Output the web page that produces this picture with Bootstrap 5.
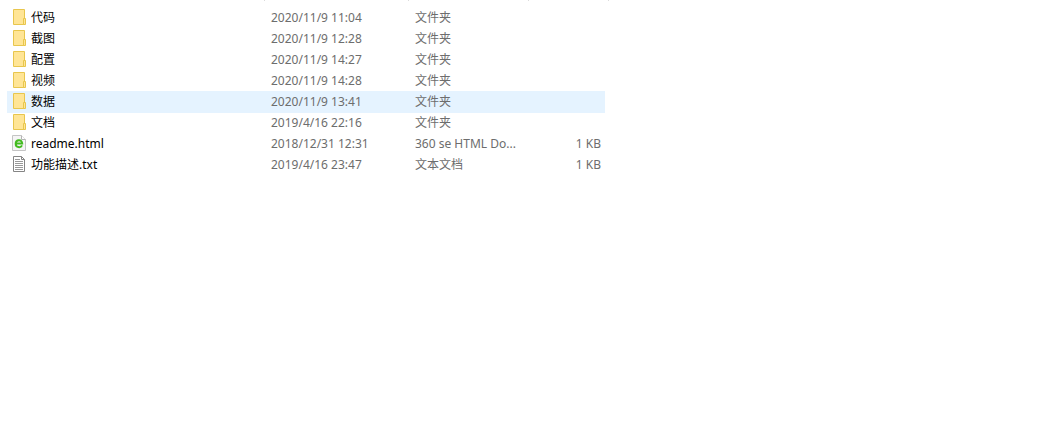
<!DOCTYPE html>
<html lang="zh-CN">
<head>
<meta charset="utf-8">
<meta name="viewport" content="width=device-width, initial-scale=1">
<title>文件列表</title>
<link href="https://cdn.jsdelivr.net/npm/bootstrap@5.3.0/dist/css/bootstrap.min.css" rel="stylesheet">
<style>
  body { background: #fff; font-family: "Noto Sans", "Noto Sans CJK SC", sans-serif; font-size: 12px; line-height: 21px; }
  .file-head { grid-template-columns: 258px 144px 120px 80px; height: 1px; padding-left: 7px; }
  .file-head span { border-right: 1px solid #dcdcdc; }
  .file-area { padding: 6px 7px; }
  .file-list { width: 598px; max-width: 100%; table-layout: fixed; color: #6d6d6d; }
  .file-list td { height: 21px; padding: 0 0 0 6px; white-space: nowrap; overflow: hidden; text-overflow: ellipsis; }
  .file-list td:first-child { padding-left: 5px; }
  .file-list td:last-child { padding-right: 4px; }
  .file-list .selected { background: #e5f3ff; box-shadow: 0 1px #e5f3ff; }
  .file-name { color: #000; gap: 5px; }
  .file-name svg { width: 14px; height: 16px; margin-top: 2px; flex: none; }
</style>
</head>
<body>
<svg class="d-none" aria-hidden="true">
  <symbol id="folder" viewBox="0 0 14 16">
    <path d="M1.500.5h11v15h-11z" fill="#ffe596" stroke="#e8c64d"/>
    <path d="M11.500 9.500h2v6h-2z" fill="#ffe596" stroke="#e8c64d"/>
  </symbol>
  <symbol id="html" viewBox="0 0 14 16">
    <path d="M.5.5h9l4 4v11H.5z" fill="#f5f5f5" stroke="#c4c4c4"/>
    <path d="M9.500.5v4h4" fill="#fff" stroke="#b4b4b4"/>
    <path d="M4 8.500h6.200C10 3.800 3.700 4.300 3.700 8.700c0 4 5 4.500 6.300 1.600" fill="none" stroke="#43bb20" stroke-width="2"/>
  </symbol>
  <symbol id="text" viewBox="0 0 14 16">
    <path d="M1.500.5h8l3 3v12h-11z" fill="#fff" stroke="#858585"/>
    <path d="M9.500.5v3h3" fill="none" stroke="#858585"/>
    <path d="M3 3.500h5M3 5.500h8M3 7.500h8M3 9.500h8M3 11.500h8M3 13.500h8" stroke="#999"/>
  </symbol>
</svg>
<div class="file-head d-grid" aria-hidden="true"><span></span><span></span><span></span><span></span></div>
<main class="file-area">
  <table class="file-list">
    <colgroup><col style="width:258px"><col style="width:144px"><col style="width:120px"><col></colgroup>
    <tbody>
      <tr><td><div class="file-name d-flex align-items-start"><svg><use href="#folder"/></svg>代码</div></td><td>2020/11/9 11:04</td><td>文件夹</td><td></td></tr>
      <tr><td><div class="file-name d-flex align-items-start"><svg><use href="#folder"/></svg>截图</div></td><td>2020/11/9 12:28</td><td>文件夹</td><td></td></tr>
      <tr><td><div class="file-name d-flex align-items-start"><svg><use href="#folder"/></svg>配置</div></td><td>2020/11/9 14:27</td><td>文件夹</td><td></td></tr>
      <tr><td><div class="file-name d-flex align-items-start"><svg><use href="#folder"/></svg>视频</div></td><td>2020/11/9 14:28</td><td>文件夹</td><td></td></tr>
      <tr class="selected"><td><div class="file-name d-flex align-items-start"><svg><use href="#folder"/></svg>数据</div></td><td>2020/11/9 13:41</td><td>文件夹</td><td></td></tr>
      <tr><td><div class="file-name d-flex align-items-start"><svg><use href="#folder"/></svg>文档</div></td><td>2019/4/16 22:16</td><td>文件夹</td><td></td></tr>
      <tr><td><div class="file-name d-flex align-items-start"><svg><use href="#html"/></svg>readme.html</div></td><td>2018/12/31 12:31</td><td>360 se HTML Do...</td><td class="text-end">1 KB</td></tr>
      <tr><td><div class="file-name d-flex align-items-start"><svg><use href="#text"/></svg>功能描述.txt</div></td><td>2019/4/16 23:47</td><td>文本文档</td><td class="text-end">1 KB</td></tr>
    </tbody>
  </table>
</main>
<script src="https://cdn.jsdelivr.net/npm/bootstrap@5.3.0/dist/js/bootstrap.bundle.min.js"></script>
</body>
</html>
